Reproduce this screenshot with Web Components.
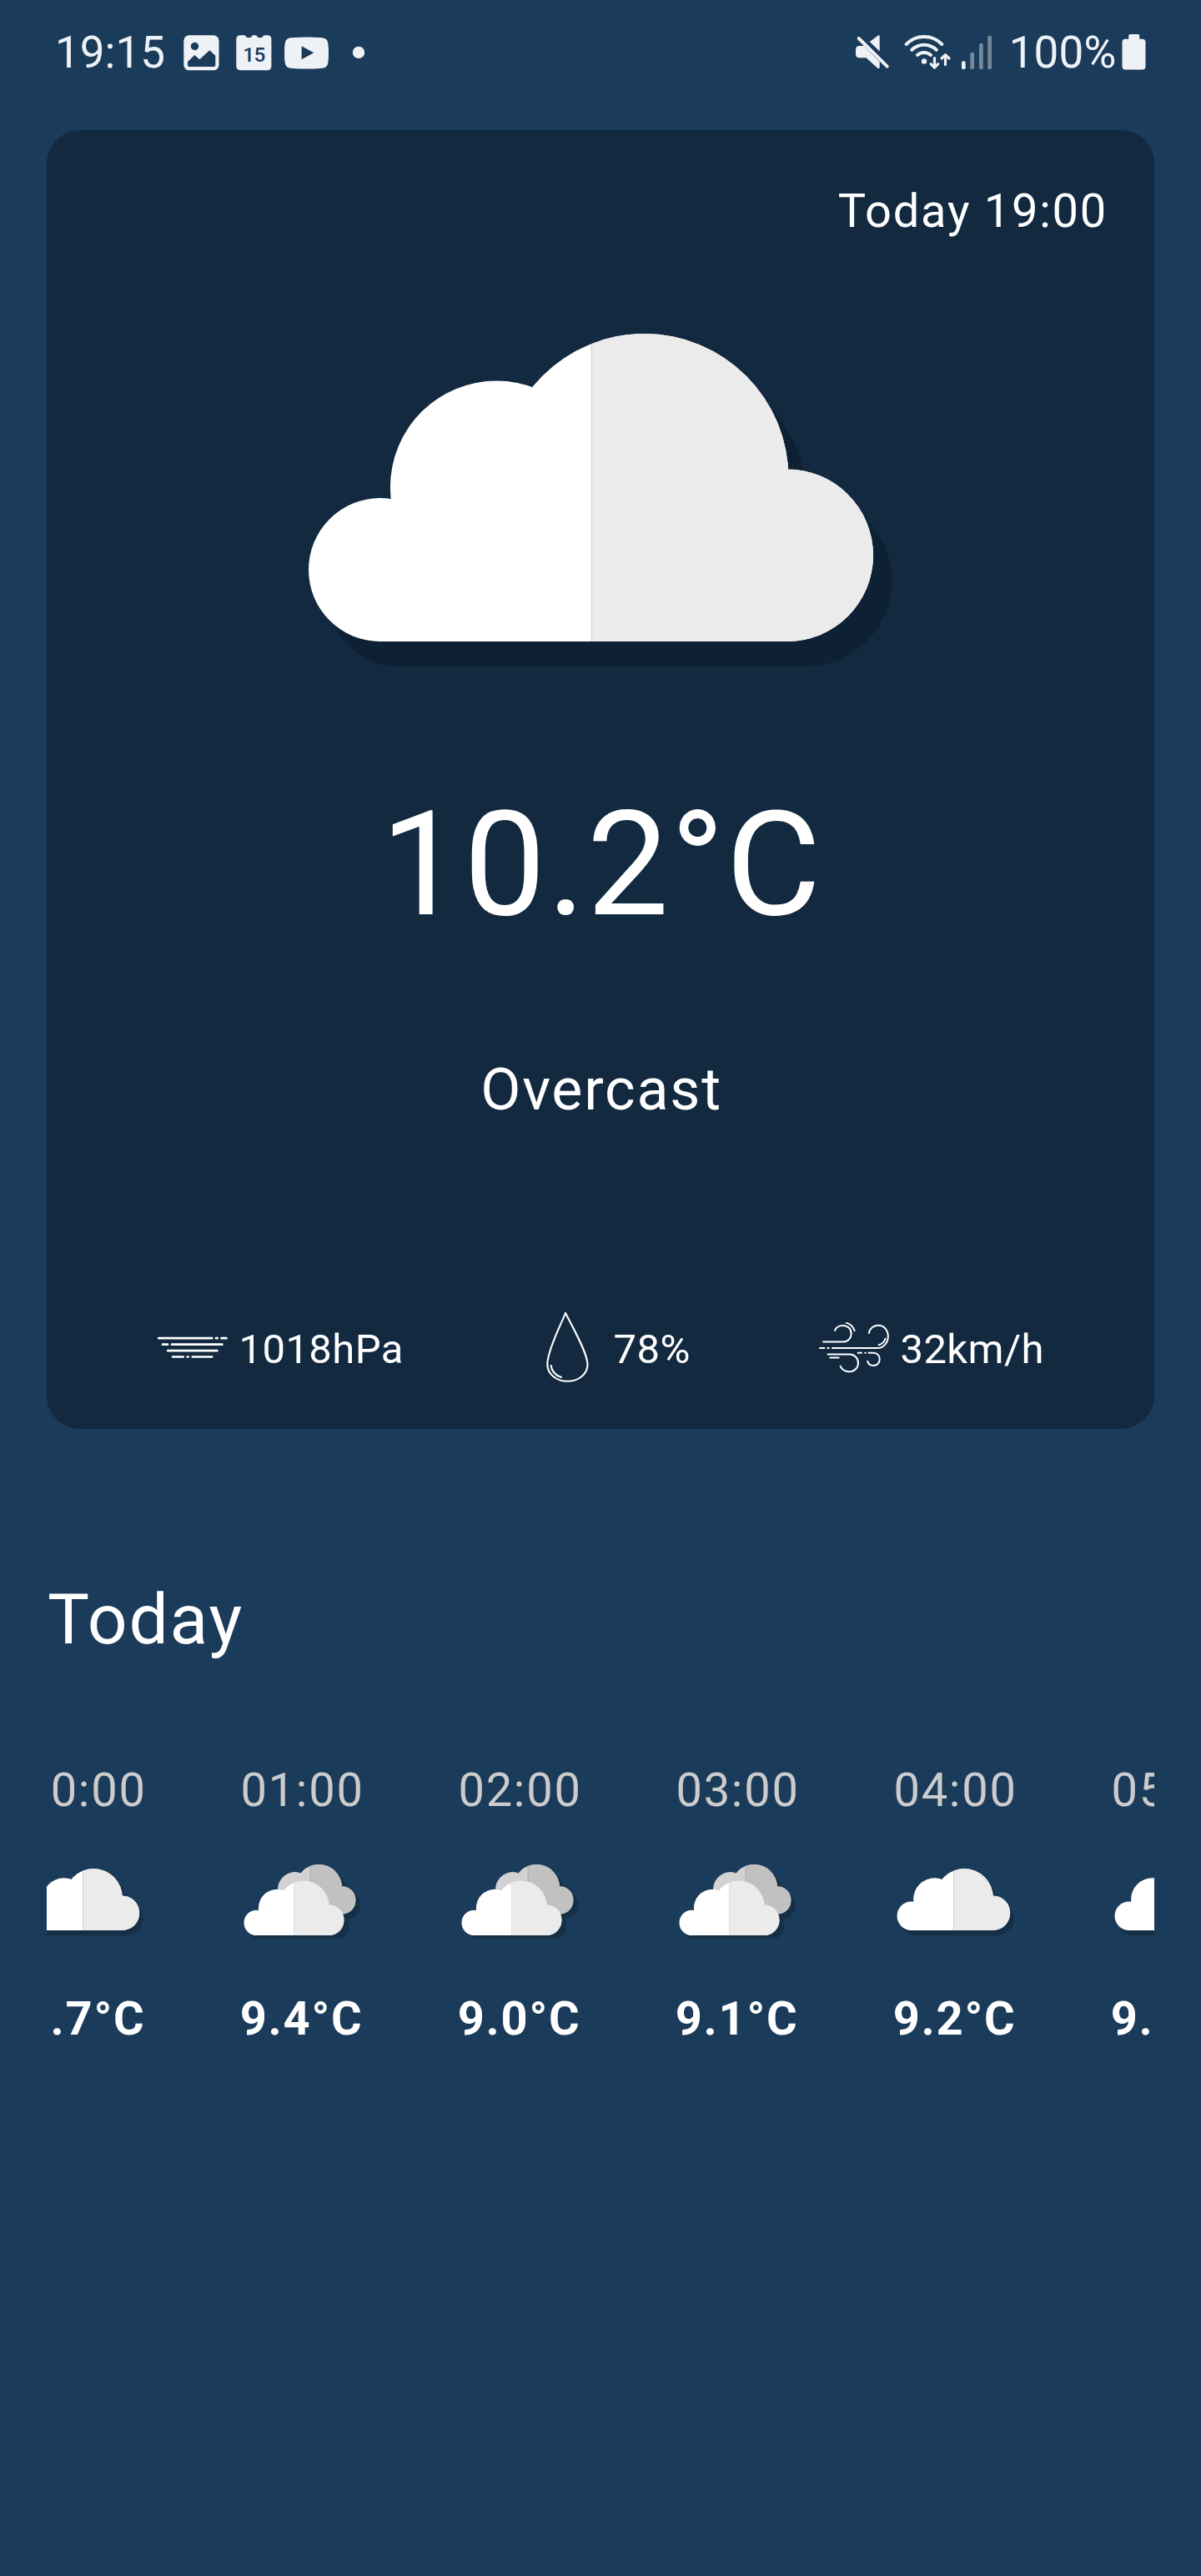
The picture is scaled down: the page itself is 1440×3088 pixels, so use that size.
<!DOCTYPE html>
<html lang="en">
<head>
<meta charset="utf-8">
<title>Weather</title>
<style>
  html, body { margin: 0; background: #1b3b5a; }
  body { font-family: Roboto, "Liberation Sans", sans-serif; color: #fff; }
</style>
</head>
<body>
<weather-app>
  <status-bar slot="status" time="19:15" battery="100%"></status-bar>
  <current-card>
    <span slot="when">Today 19:00</span>
    <cloud-icon slot="icon" kind="large"></cloud-icon>
    <span slot="temp">10.2°C</span>
    <span slot="summary">Overcast</span>
    <weather-detail slot="details" icon="pressure">1018hPa</weather-detail>
    <weather-detail slot="details" icon="humidity">78%</weather-detail>
    <weather-detail slot="details" icon="wind">32km/h</weather-detail>
  </current-card>
  <hourly-strip>
    <span slot="title">Today</span>
    <hour-item time="00:00" kind="overcast">9.7°C</hour-item>
    <hour-item time="01:00" kind="broken">9.4°C</hour-item>
    <hour-item time="02:00" kind="broken">9.0°C</hour-item>
    <hour-item time="03:00" kind="broken">9.1°C</hour-item>
    <hour-item time="04:00" kind="overcast">9.2°C</hour-item>
    <hour-item time="05:00" kind="overcast">9.2°C</hour-item>
  </hourly-strip>
</weather-app>
<script>
class Base extends HTMLElement {
  connectedCallback() {
    if (!this.shadowRoot) this.attachShadow({ mode: 'open' }).innerHTML = this.render();
  }
}

customElements.define('weather-app', class extends Base {
  render() {
    return `<style>
      :host { display: flex; flex-direction: column; width: 1440px; height: 3088px; overflow: hidden; background: #1b3b5a; }
      main { display: flex; flex-direction: column; padding: 28px 56px 0; gap: 179.5px; }
    </style>
    <slot name="status"></slot><main><slot></slot></main>`;
  }
});

customElements.define('status-bar', class extends Base {
  render() {
    return `<style>
      :host { display: flex; justify-content: space-between; height: 128px; padding: 0 66px 0 66px; box-sizing: border-box; color: #eef1f5; font-size: 53px; line-height: 62px; }
      div { display: flex; align-items: flex-start; padding-top: 32px; }
      svg { display: block; fill: #eef1f5; flex: none; margin-top: 8px; }
      .pct { letter-spacing: .2px; }
    </style>
    <div>
      <span>${this.getAttribute('time')}</span>
      <svg style="margin-left:21px" width="221" height="46" viewBox="219 40 221 46">
        <rect x="220.3" y="42.3" width="42.2" height="42" rx="6.5"/>
        <g fill="#1b3b5a">
          <circle cx="233.5" cy="55.5" r="4.7"/>
          <path d="M225 74 L233.3 66 L239.3 71.2 L251.3 60.2 L258.3 66.8 V78 Q258.3 80 256.3 80 H227 Q225 80 225 78 Z"/>
        </g>
        <path d="M288.5 42.3 H293.8 A4.9 4.9 0 0 0 302.8 42.3 H307.3 A4.9 4.9 0 0 0 316.3 42.3 H320.5 Q325.4 42.3 325.4 47.2 V79.3 Q325.4 84.2 320.5 84.2 H288.2 Q283.3 84.2 283.3 79.3 V47.2 Q283.3 42.3 288.5 42.3 Z"/>
        <text x="291.2" y="74" font-family="Roboto" font-size="24.3" font-weight="500" fill="#1b3b5a" textLength="27">15</text>
        <path d="M341 63.4 Q341 51.5 342.6 48.9 Q344.2 45.9 348.5 45.3 Q367.5 43.5 386.5 45.3 Q390.8 45.9 392.4 48.9 Q394 51.5 394 63.4 Q394 75.3 392.4 78.2 Q390.8 81.2 386.5 81.7 Q367.5 83.5 348.5 81.7 Q344.2 81.2 342.6 78.2 Q341 75.3 341 63.4 Z"/>
        <path fill="#1b3b5a" d="M361.6 55.3 V71.3 L376.2 63.3 Z"/>
        <circle cx="430" cy="62.9" r="7.2"/>
      </svg>
    </div>
    <div>
      <svg width="168" height="46" viewBox="1024 40 168 46">
        <path d="M1054.7 43.5 V61.5 L1042.8 49.9 L1052.5 42.7 Q1054.7 41.5 1054.7 43.5 Z"/>
        <path d="M1030 46 L1064 80" fill="none" stroke="#1b3b5a" stroke-width="8"/>
        <path d="M1029.7 46 L1063.7 79.7" fill="none" stroke="#eef1f5" stroke-width="4" stroke-linecap="round"/>
        <path d="M1030.5 55 H1036 L1054.7 74 V80.5 Q1054.7 83 1052 81.5 L1038.5 69.3 H1030.5 Q1026 69.3 1026 64.8 V59.5 Q1026 55 1030.5 55 Z"/>
        <g fill="none" stroke="#eef1f5" stroke-width="4" stroke-linecap="round" stroke-linejoin="round">
          <path d="M1086.7 53 Q1095.5 44 1108 44 Q1120.5 44 1129.3 53"/>
          <path d="M1093.3 59.8 Q1099.5 53.7 1108 53.7 Q1116.5 53.7 1122.7 59.8"/>
          <path d="M1100 66 Q1103.3 63 1108 63 Q1112.7 63 1116 66"/>
          <path stroke-width="3.2" d="M1120.5 69.5 V80.5 M1116.2 76.7 L1120.5 81 L1124.800 76.700 M1133.500 77.500 V66 M1129 70 L1133.500 65.600 L1138 70"/>
        </g>
        <circle cx="1108" cy="73.400" r="3.200"/>
        <rect x="1153" y="73.300" width="4.700" height="9.700" rx="1.800"/>
        <g fill="#768899">
          <rect x="1163.300" y="62.700" width="4.700" height="20.300" rx="1.800"/>
          <rect x="1174" y="52" width="4.700" height="31" rx="1.800"/>
          <rect x="1184.300" y="42.700" width="4.700" height="40.300" rx="1.800"/>
        </g>
      </svg>
      <span class="pct" style="margin-left:18px">${this.getAttribute('battery')}</span>
      <svg style="margin-left:6.400px" width="29" height="46" viewBox="1345.500 40 29 46">
        <path d="M1355.500 41 H1365 Q1366.700 41 1366.700 43 V46.800 H1370 Q1374 46.800 1374 50.800 V79.500 Q1374 83.500 1370 83.500 H1350 Q1346 83.500 1346 79.500 V50.800 Q1346 46.800 1350 46.800 H1353.700 V43 Q1353.700 41 1355.500 41 Z"/>
      </svg>
    </div>`;
  }
});

customElements.define('current-card', class extends Base {
  render() {
    return `<style>
      :host { display: flex; flex-direction: column; align-items: center; box-sizing: border-box; height: 1556.500px; padding: 64px 56px 0; border-radius: 40px; background: #122940; letter-spacing: 1.750px; }
      .when { align-self: flex-end; font-size: 56px; line-height: 66px; }
      .icon { margin-top: 114px; height: 400px; display: flex; }
      .temp { margin-top: 134px; padding-left: 2px; font-size: 175px; line-height: 205px; letter-spacing: 1.500px; }
      .summary { margin-top: 126px; padding-left: 2px; font-size: 70px; line-height: 82px; }
      .details { align-self: stretch; display: flex; justify-content: space-between; margin-top: 226px; padding: 0 76px 0 77px; }
    </style>
    <div class="when"><slot name="when"></slot></div>
    <div class="icon"><slot name="icon"></slot></div>
    <div class="temp"><slot name="temp"></slot></div>
    <div class="summary"><slot name="summary"></slot></div>
    <div class="details"><slot name="details"></slot></div>`;
  }
});

/* The cloud is four lobes over a flat base, all wound clockwise so they merge into one fill. */
const lobe = (cx, cy, r) => `M${cx - r} ${cy} a${r} ${r} 0 1 1 ${2 * r} 0 a${r} ${r} 0 1 1 ${-2 * r} 0 Z`;
const CLOUD = lobe(86, 283, 86) + lobe(225.4, 184, 127.5) + lobe(402.5, 173, 173) + lobe(573.7, 265.7, 103.3)
  + 'M86 369 V283 L225 184 L402 173 L574 266 V369 Z';
let uid = 0;
function cloud(x, y, s, left, right, seam, seamW) {
  const id = 'c' + (uid++);
  return `<g transform="translate(${x} ${y}) scale(${s})"><clipPath id="${id}"><path d="${CLOUD}"/></clipPath>
    <path d="${CLOUD}" fill="${left}"/>
    <g clip-path="url(#${id})"><rect x="339.400" y="-5" width="345" height="380" fill="${right}"/>
    <rect x="${339.4 - seamW / 2}" y="-5" width="${seamW}" height="380" fill="${seam}"/></g></g>`;
}
function shadow(x, y, s, dx, dy) {
  return `<path d="${CLOUD}" transform="translate(${x + dx} ${y + dy}) scale(${s})"/>`;
}

customElements.define('cloud-icon', class extends Base {
  render() {
    const kind = this.getAttribute('kind');
    const style = '<style>:host{display:block}svg{display:block}</style>';
    if (kind === 'large') return `${style}<svg width="700" height="400" viewBox="370 400 700 400">
      <g opacity=".2">${shadow(370, 400, 1, 22.5, 30)}</g>${cloud(370, 400, 1, '#fff', '#ebebeb', '#c9cccf', 1)}</svg>`;
    if (kind === 'overcast') return `${style}<svg width="149" height="92" viewBox="288.5 2232 149 92">
      <g opacity=".2">${shadow(292, 2240, .2004, 4.5, 6)}</g>${cloud(292, 2240, .2004, '#fff', '#ebebeb', '#c3c8ce', 4)}</svg>`;
    return `${style}<svg width="149" height="92" viewBox="288.5 2232 149 92">
      <g opacity=".2">${shadow(292, 2254.7, .1773, 6, 6)}${shadow(316.8, 2235, .1613, 5.7, 6)}</g>
      ${cloud(316.8, 2235, .1613, '#d2d2d2', '#c1c1c1', '#a3a6ab', 5)}
      ${cloud(292, 2254.7, .1773, '#fff', '#ebebeb', '#d3d6d8', 4)}</svg>`;
  }
});

const DETAIL_ICONS = {
  pressure: `<svg width="84" height="84" viewBox="189.300 1573 84 84"><g stroke-width="2.700" stroke-linecap="round">
    <path d="M190.500 1604.200H254.500M259.300 1604.200H261M265.800 1604.200H271.800M195.300 1611.700H201.300M206.300 1611.700H266.700M201.500 1619.200H260.700M207.300 1626.500H220M225 1626.500H226M231 1626.500H254.500"/></g></svg>`,
  humidity: `<svg width="84" height="84" viewBox="638 1573 84 84"><g stroke-width="2.100" stroke-linecap="round" stroke-linejoin="round">
    <path d="M678 1574 C674 1585 656.300 1618 656.300 1635.500 C656.300 1647 667 1655.800 680.300 1655.800 C694 1655.800 704.500 1647 704.500 1635.500 C704.500 1622 686 1590 678 1574 Z"/>
    <path d="M660.600 1637 C661.500 1644 666 1648.500 673 1651"/></g></svg>`,
  wind: `<svg width="84" height="84" viewBox="982 1573 84 84"><g stroke-width="2" stroke-linecap="round">
    <path d="M987 1608.600 H1011 C1016.500 1608.600 1020.700 1604 1020.700 1598.700 C1020.700 1593.300 1016.500 1589 1011 1589 C1006 1589 1002.300 1591.500 1001 1595"/>
    <path d="M1014.700 1585.900 Q1022 1587.700 1024.600 1595.300"/>
    <path d="M983 1616.100 H988.300 M992.300 1616.100 H993.700 M998 1616.100 H1051.500 C1059.500 1616.100 1064.800 1609.500 1064.800 1602 C1064.800 1594.500 1060 1588.700 1052.800 1588.700 C1047 1588.700 1042.500 1593 1041.800 1598"/>
    <path d="M1061.500 1604.700 Q1059.500 1610.800 1053.700 1612.200"/>
    <path d="M992.500 1623.400 H1018.700 C1024.500 1623.400 1029 1628.200 1029 1634 C1029 1639.800 1024.300 1644.300 1018.500 1644.300 C1013.500 1644.300 1009.300 1641.700 1007.600 1637.700"/>
    <path d="M995.300 1627.500 H1005.700"/>
    <path d="M1028.700 1621.700 H1033 M1037.200 1621.700 H1037.700 M1041.500 1621.700 H1047.300 C1051.700 1621.700 1054.700 1625 1054.700 1629.400 C1054.700 1633.700 1051.700 1637 1047.300 1637 C1043.700 1637 1041 1635 1040.200 1631.800"/></g></svg>`
};
customElements.define('weather-detail', class extends Base {
  render() {
    return `<style>
      :host { display: flex; align-items: center; gap: 13.500px; height: 84px; font-size: 49px; line-height: 57px; letter-spacing: .4px; }
      svg { display: block; fill: none; stroke: #fff; flex: none; }
      span { padding-top: 5px; }
    </style>${DETAIL_ICONS[this.getAttribute('icon')]}<span><slot></slot></span>`;
  }
});

customElements.define('hourly-strip', class extends Base {
  render() {
    return `<style>
      :host { display: flex; flex-direction: column; letter-spacing: 1.750px; }
      h2 { margin: 0; padding-left: 1px; font-size: 84px; line-height: 99px; font-weight: 400; }
      .row { display: flex; gap: 112px; margin-top: 122px; overflow: hidden; }
      .row::before { content: ""; flex: none; width: 0; margin-left: -140.500px; }
    </style><h2><slot name="title"></slot></h2><div class="row"><slot></slot></div>`;
  }
});

customElements.define('hour-item', class extends Base {
  render() {
    return `<style>
      :host { display: flex; flex-direction: column; align-items: center; flex: none; width: 149px; font-size: 56px; line-height: 66px; white-space: nowrap; }
      .time { color: #ccc; padding-right: 1px; }
      cloud-icon { margin: 53px 0 63px; }
      .temp { font-weight: 700; padding-right: 3px; }
    </style>
    <span class="time">${this.getAttribute('time')}</span>
    <cloud-icon kind="${this.getAttribute('kind')}"></cloud-icon>
    <span class="temp"><slot></slot></span>`;
  }
});
</script>
</body>
</html>
